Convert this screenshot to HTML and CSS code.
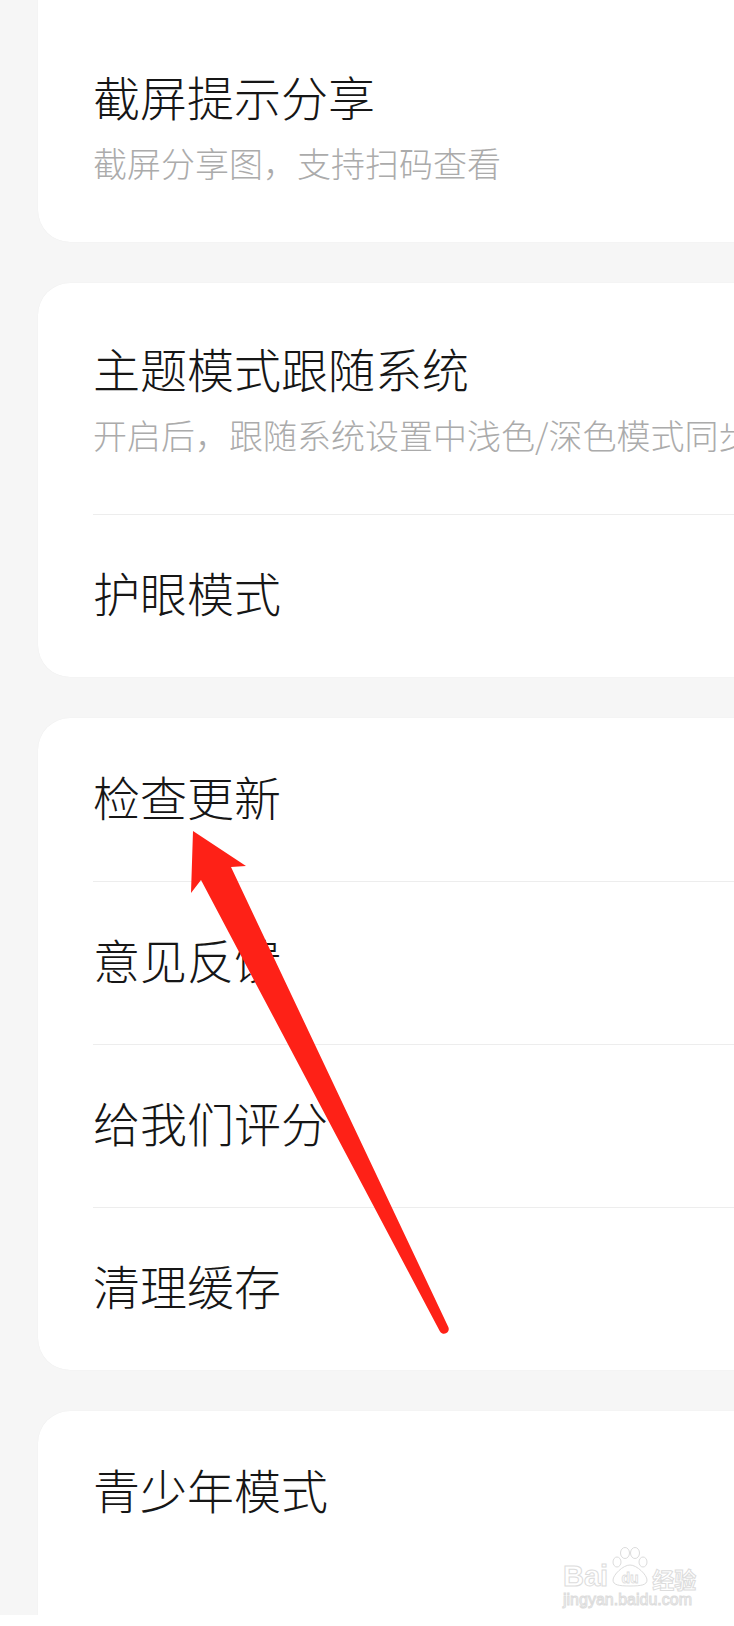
FILE: index.html
```html
<!DOCTYPE html>
<html lang="zh-CN">
<head>
    <meta charset="UTF-8">
    <meta name="viewport" content="width=device-width, initial-scale=1.0">
    <title>设置</title>
    <link rel="stylesheet" href="styles.css">
</head>
<body>
    <div class="settings">
        <section class="card card-first">
            <div class="row row-two">
                <div class="row-title">截屏提示分享</div>
                <div class="row-desc">截屏分享图，支持扫码查看</div>
            </div>
        </section>

        <section class="card">
            <div class="row row-two">
                <div class="row-title">主题模式跟随系统</div>
                <div class="row-desc">开启后，跟随系统设置中浅色/深色模式同步</div>
            </div>
            <div class="row">
                <div class="row-title">护眼模式</div>
            </div>
        </section>

        <section class="card">
            <div class="row">
                <div class="row-title">检查更新</div>
            </div>
            <div class="row">
                <div class="row-title">意见反馈</div>
            </div>
            <div class="row">
                <div class="row-title">给我们评分</div>
            </div>
            <div class="row">
                <div class="row-title">清理缓存</div>
            </div>
        </section>

        <section class="card card-last">
            <div class="row">
                <div class="row-title">青少年模式</div>
            </div>
        </section>
    </div>

    <!-- red hint arrow drawn over the list -->
    <svg class="arrow" width="734" height="1626" viewBox="0 0 734 1626">
        <path d="M193 831 L246 866 L231 867 L448.3 1327 A4.7 4.7 0 0 1 439.7 1331 L201 880 L191 893 Z" fill="#fe2117"/>
    </svg>

    <div class="watermark">
        <div class="wm-top">
            <span class="wm-bai">Bai</span>
            <svg class="wm-paw" width="40" height="40" viewBox="0 0 40 40">
                <g fill="#fff" stroke="#dcdcdc" stroke-width="1">
                    <ellipse cx="7" cy="15" rx="4" ry="5"/>
                    <ellipse cx="15" cy="6" rx="4.5" ry="5.5"/>
                    <ellipse cx="25" cy="6" rx="4.5" ry="5.5"/>
                    <ellipse cx="33" cy="15" rx="4" ry="5"/>
                    <path d="M20 18 C27 18 37 28 37 33 C37 38 31 39 20 39 C9 39 3 38 3 33 C3 28 13 18 20 18 Z"/>
                </g>
                <text x="20" y="36" text-anchor="middle" class="wm-du">du</text>
            </svg>
            <span class="wm-jy">经验</span>
        </div>
        <div class="wm-url">jingyan.baidu.com</div>
    </div>

    <div class="nav-bar"></div>
</body>
</html>
```

FILE: styles.css
```css
html, body {
    margin: 0;
    padding: 0;
}
body {
    width: 734px;
    height: 1626px;
    overflow: hidden;
    position: relative;
    background-color: #f6f6f6;
    font-family: "Noto Sans CJK SC", "Noto Sans", sans-serif;
}
.settings {
    padding-left: 38px;
    margin-right: -60px;
    display: flex;
    flex-direction: column;
    gap: 41px;
}
.card {
    background-color: #fff;
    border-radius: 32px;
    box-shadow: 0 0 1px rgba(0, 0, 0, 0.08);
}
.card-first {
    margin-top: -39px;
    padding-top: 50px;
}
.card-last {
    padding-bottom: 120px;
}
.row {
    margin-left: 55px;
    height: 163px;
    box-sizing: border-box;
    padding-bottom: 8px;
    display: flex;
    flex-direction: column;
    justify-content: center;
}
.row + .row {
    border-top: 1px solid #ededed;
}
.row-two {
    height: 231px;
    justify-content: flex-start;
    padding-top: 57px;
    padding-bottom: 0;
}
.row-title {
    font-size: 47px;
    line-height: 56px;
    font-weight: 300;
    color: #161616;
    white-space: nowrap;
}
.row-desc {
    margin-top: 19px;
    font-size: 34px;
    line-height: 40px;
    font-weight: 300;
    color: #ababab;
    white-space: nowrap;
}
.arrow {
    position: absolute;
    left: 0;
    top: 0;
}
.watermark {
    position: absolute;
    left: 563px;
    top: 1547px;
    font-family: "Liberation Sans", Arial, sans-serif;
    color: #fff;
    -webkit-text-stroke: 1px #dcdcdc;
}
.wm-top {
    display: flex;
    align-items: flex-end;
    height: 40px;
}
.wm-bai {
    font-size: 29px;
    line-height: 29px;
    font-weight: bold;
    margin-bottom: -4px;
}
.wm-paw {
    display: block;
    margin-left: 2px;
}
.wm-du {
    font-size: 14px;
    font-weight: bold;
    fill: #fff;
    stroke: #dcdcdc;
    stroke-width: 0.8;
}
.wm-jy {
    font-family: "Noto Sans CJK SC", sans-serif;
    font-size: 22px;
    line-height: 22px;
    font-weight: bold;
    margin-left: 2px;
    margin-bottom: -2px;
}
.wm-url {
    margin-top: 4px;
    font-size: 16px;
    line-height: 18px;
}
.nav-bar {
    position: fixed;
    left: 0;
    right: 0;
    bottom: 0;
    height: 11px;
    background-color: #fff;
}
```
